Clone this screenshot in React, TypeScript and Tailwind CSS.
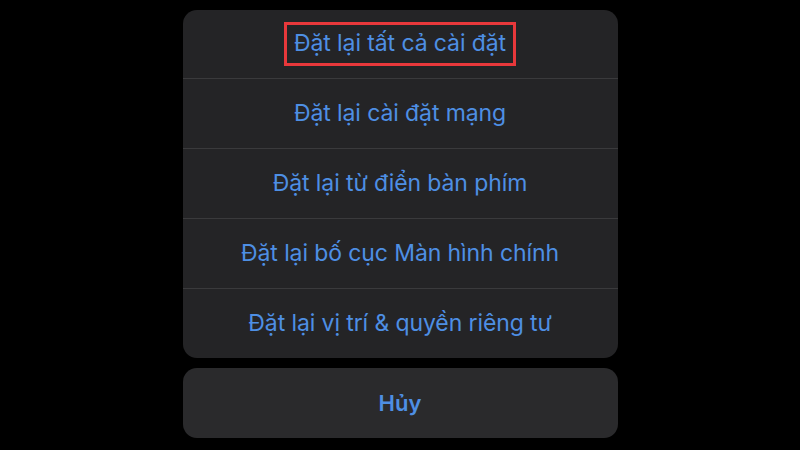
import React from 'react';

const options = [
  'Đặt lại tất cả cài đặt',
  'Đặt lại cài đặt mạng',
  'Đặt lại từ điển bàn phím',
  'Đặt lại bố cục Màn hình chính',
  'Đặt lại vị trí & quyền riêng tư',
];

export default function App() {
  return (
    <div
      className="w-[800px] h-[450px] bg-black flex flex-col items-center pt-[10px] overflow-hidden"
      style={{ fontFamily: 'Inter, Roboto, "Noto Sans", sans-serif' }}
    >
      {/* danh sách tuỳ chọn */}
      <div className="w-[435px] bg-[#242426] rounded-[14px] flex flex-col">
        {options.map((label, index) => (
          <div
            key={label}
            className={
              index === 0
                ? 'h-[68px] flex items-center justify-center'
                : 'h-[70px] flex items-center justify-center border-t border-[#3a3a3c]'
            }
          >
            {index === 0 ? (
              <span className="border-[3px] border-[#e8383b] px-[7px] pt-[1px] pb-[2px] text-[23px] text-[#4e8fe4] tracking-[-0.1px]">
                {label}
              </span>
            ) : (
              <span className="text-[23px] text-[#4e8fe4] tracking-[-0.1px]">
                {label}
              </span>
            )}
          </div>
        ))}
      </div>

      {/* nút Hủy */}
      <div className="mt-[10px] w-[435px] h-[70px] bg-[#2a2a2c] rounded-[14px] flex items-center justify-center">
        <span className="text-[22px] font-semibold text-[#4e8fe4]">Hủy</span>
      </div>
    </div>
  );
}
